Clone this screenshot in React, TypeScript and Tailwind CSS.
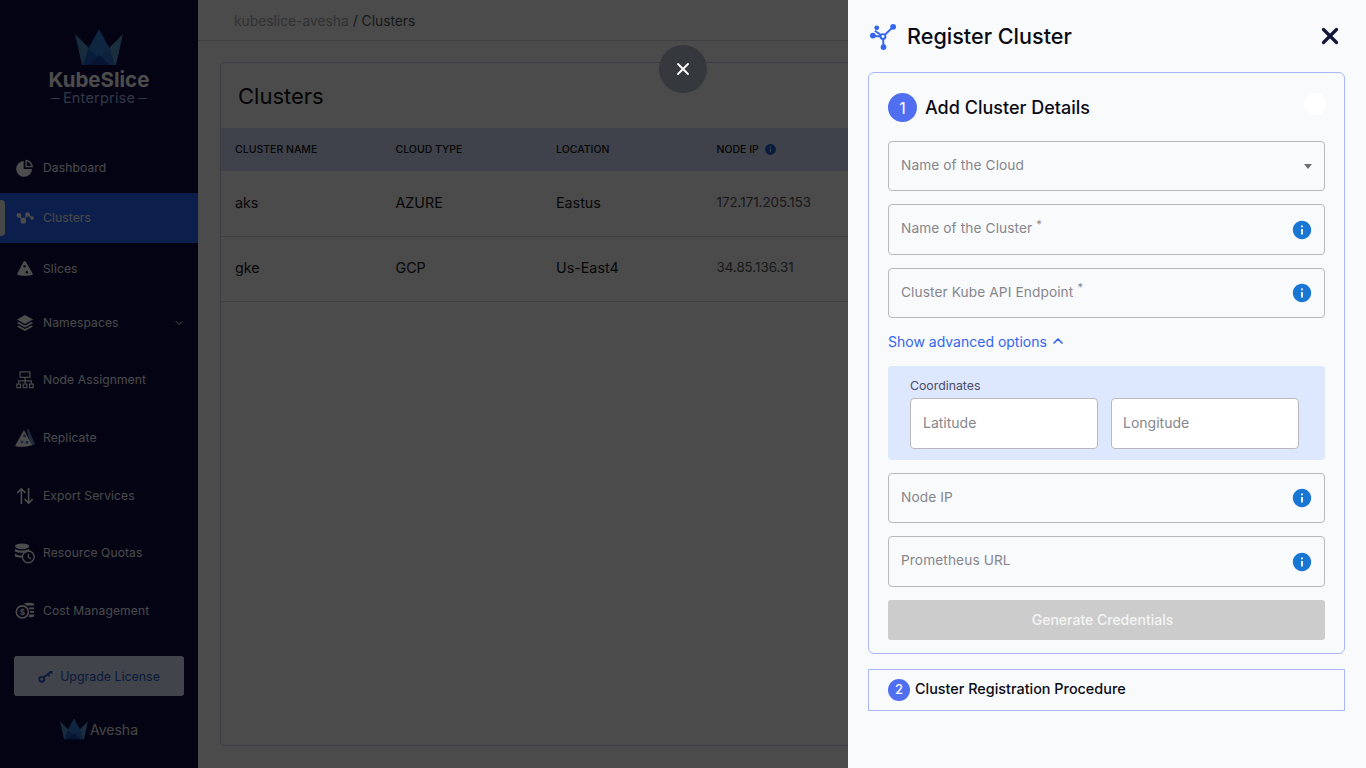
import { ChevronDown, ChevronUp, X } from "lucide-react";

const font = "font-['Inter','Liberation_Sans',sans-serif]";

const Crown = ({ className }: { className: string }) => (
  <svg viewBox="0 0 48 37" className={className}>
    <path d="M0 5 L17 22 L12 36 H7z" fill="#4f93c8" />
    <path d="M48 5 L31 22 L36 36 H41z" fill="#5a9ccc" />
    <path d="M24 0 L35 20 L24 30 L13 20z" fill="#2f7fd8" />
    <path d="M13 20 L24 29 L13 36 H8z" fill="#2460c8" />
    <path d="M35 20 L24 29 L35 36 H40z" fill="#2f70cc" />
    <path d="M24 26 L35 36 H13z" fill="#1a48a8" />
  </svg>
);

const PieIcon = () => (
  <svg viewBox="0 0 20 20" className="w-[18px] h-[18px]" fill="currentColor">
    <path d="M8.5 2.2 V11 H17.8 A8.8 8.8 0 1 1 8.5 2.2z" />
    <path d="M10.5 .8 A8.8 8.8 0 0 1 19 9.2 H10.5z M12 2.6 V7.7 H17 A7 7 0 0 0 12 2.6z" fillRule="evenodd" />
  </svg>
);
const ClusterIcon = () => (
  <svg viewBox="0 0 20 16" className="w-[18px] h-[14px]" fill="currentColor" stroke="currentColor" strokeWidth="1.3">
    <path d="M3 5 L8 11 L13 4 L18 8" fill="none" />
    <circle cx="3" cy="5" r="2" />
    <circle cx="8" cy="11" r="2.6" />
    <circle cx="13" cy="4" r="2" />
    <circle cx="18" cy="8" r="1.3" />
  </svg>
);
const SliceIcon = () => (
  <svg viewBox="0 0 20 20" className="w-[18px] h-[18px]">
    <path d="M9.5 1 C10 1 10.4 1.2 10.7 1.7 L19 15.8 C15 18 5 18.2 1 15.8 L8.5 1.6 C8.7 1.2 9 1 9.5 1z" fill="currentColor" />
    <circle cx="9.5" cy="7" r="1.3" fill="#0a0a42" />
    <circle cx="12" cy="13.5" r="1.3" fill="#0a0a42" />
  </svg>
);
const LayersIcon = () => (
  <svg viewBox="0 0 20 20" className="w-[18px] h-[18px]" fill="currentColor">
    <path d="M10 1 L19 6 L10 11 L1 6z" />
    <path d="M3 8.8 L10 12.8 L17 8.8 L19 10 L10 15 L1 10z" />
    <path d="M3 12.8 L10 16.8 L17 12.8 L19 14 L10 19 L1 14z" />
  </svg>
);
const NodeIcon = () => (
  <svg viewBox="0 0 20 20" className="w-[18px] h-[18px]" fill="none" stroke="currentColor" strokeWidth="1.3">
    <rect x="4.5" y="1" width="11" height="6" />
    <path d="M10 7 V11 M3 14 V11 H17 V14 M10 11 V14" />
    <rect x="1" y="14.5" width="4" height="4" />
    <rect x="8" y="14.5" width="4" height="4" />
    <rect x="15" y="14.5" width="4" height="4" />
  </svg>
);
const ReplicateIcon = () => (
  <svg viewBox="0 0 22 22" className="w-[22px] h-[22px]">
    <path d="M14 1 L21 17 L17 19 L13 4z" fill="#6d8fc8" />
    <path d="M10 3 L18 18 C13 20 6 20.5 1 19 z" fill="currentColor" />
    <circle cx="10.5" cy="9" r="1.4" fill="#5578c0" />
    <circle cx="8" cy="15" r="1.4" fill="#5578c0" />
    <circle cx="13" cy="15.5" r="1.4" fill="#5578c0" />
  </svg>
);
const ExportIcon = () => (
  <svg viewBox="0 0 20 20" className="w-[18px] h-[18px]" fill="none" stroke="currentColor" strokeWidth="1.8">
    <path d="M6 19 V2 M1.5 6.5 L6 2 L10.5 6.5" />
    <path d="M14 1 V18 M9.5 13.5 L14 18 L18.5 13.5" />
  </svg>
);
const QuotaIcon = () => (
  <svg viewBox="0 0 22 22" className="w-[21px] h-[21px]" fill="currentColor">
    <ellipse cx="8.5" cy="3.5" rx="7.5" ry="3" />
    <path d="M1 6 C3 8.5 14 8.5 16 6 V9 C13 10.5 4 11 1 9z" />
    <path d="M1 11 C3 13 7 13.3 9 13 L8 15.5 C5 15.5 2.5 15 1 14z" />
    <circle cx="15" cy="14.5" r="6.2" fill="none" stroke="currentColor" strokeWidth="1.5" />
    <path d="M15 11 V15 L18 16.5" fill="none" stroke="currentColor" strokeWidth="1.3" />
  </svg>
);
const CostIcon = () => (
  <svg viewBox="0 0 22 20" className="w-[20px] h-[18px]" fill="currentColor">
    <path d="M10 2 C12 .5 19 .5 21 2 V4 H13z M15 6 H21 V8 H16z M16.5 10 H21 V12 H16.5z M16 14 H21 V16 C19 17 17 17 15 17z" />
    <circle cx="8" cy="11" r="6.7" fill="none" stroke="currentColor" strokeWidth="1.7" />
    <text x="8" y="14.5" textAnchor="middle" fontSize="9.5" fontWeight="700" fontFamily="Liberation Sans">$</text>
  </svg>
);
const KeyIcon = () => (
  <svg viewBox="0 0 16 14" className="w-[15px] h-[13px]" fill="none" stroke="currentColor" strokeWidth="2">
    <circle cx="4" cy="10" r="2.6" />
    <path d="M6 8 L14 2 M10.5 4.6 L12.5 6.8" />
    <path d="M12 1 L15.5 1 L15.5 4.5z" fill="currentColor" stroke="none" />
  </svg>
);

const nav = [
  { label: "Dashboard", icon: <PieIcon />, h: "h-[50px]" },
  { label: "Clusters", icon: <ClusterIcon />, h: "h-[50px]", active: true },
  { label: "Slices", icon: <SliceIcon />, h: "h-[52px]" },
  { label: "Namespaces", icon: <LayersIcon />, h: "h-[56px]", more: true },
  { label: "Node Assignment", icon: <NodeIcon />, h: "h-[58px]" },
  { label: "Replicate", icon: <ReplicateIcon />, h: "h-[58px]" },
  { label: "Export Services", icon: <ExportIcon />, h: "h-[57px]" },
  { label: "Resource Quotas", icon: <QuotaIcon />, h: "h-[58px]" },
  { label: "Cost Management", icon: <CostIcon />, h: "h-[58px]" },
];

const rows = [
  { h: "h-[66px]", cells: ["aks", "AZURE", "Eastus", "172.171.205.153"] },
  { h: "h-[65px]", cells: ["gke", "GCP", "Us-East4", "34.85.136.31"] },
];

const InfoIcon = () => (
  <svg viewBox="0 0 24 24" className="w-[22px] h-[22px] shrink-0" fill="#1976d2">
    <path d="M12 2C6.48 2 2 6.48 2 12s4.48 10 10 10 10-4.48 10-10S17.52 2 12 2zm1 15h-2v-6h2v6zm0-8h-2V7h2v2z" />
  </svg>
);

const Field = ({ label, req, info, h = "h-[50px]", top = "pb-[2px]" }: { label: string; req?: boolean; info?: boolean; h?: string; top?: string }) => (
  <div className={`${h} border border-[#b9b9bd] rounded-[4px] flex items-center justify-between pl-[12px] pr-[11px]`}>
    <span className={`text-[13.7px] tracking-[0.1px] text-[#86868c] ${top}`}>
      {label}
      {req && <sup className="ml-[4px] text-[11px]">*</sup>}
    </span>
    {info && <InfoIcon />}
  </div>
);

export default function App() {
  return (
    <div className={`${font} relative flex h-screen w-full overflow-hidden bg-[#fafafa]`}>
      <aside className="w-[198px] shrink-0 bg-[#0a0a42] text-white flex flex-col">
        <div className="h-[143px] flex flex-col items-center pt-[29px]">
          <Crown className="w-[48px] h-[37px]" />
          <div className="text-[20.5px] leading-[22px] font-bold text-[#ffffff] mt-[3px]">KubeSlice</div>
          <div className="flex items-center gap-[3px] text-[#a8bce8] text-[14.5px] leading-[14px] tracking-[0.2px]">
            <span className="w-[9px] h-px bg-[#a8bce8]" />
            Enterprise
            <span className="w-[9px] h-px bg-[#a8bce8]" />
          </div>
        </div>
        <nav>
          {nav.map((n) => (
            <div key={n.label} className={`${n.h} relative flex items-center ${n.active ? "bg-[#2868ff]" : ""}`}>
              {n.active && <span className="absolute left-0 top-[7px] w-[5px] h-[36px] rounded-r-[4px] bg-[#f0f0f0]" />}
              <span className="w-[43px] flex justify-center pl-[7px] pr-[1px] shrink-0 text-[#ffffff]">{n.icon}</span>
              <span className="text-[12.1px] tracking-[0.1px] text-[#f4f4f4] pt-[1px]">{n.label}</span>
              {n.more && <ChevronDown className="ml-auto mr-[13px] w-[12px] h-[12px]" strokeWidth={2} />}
            </div>
          ))}
        </nav>
        <div className="mx-[14px] mt-[16px] h-[40px] rounded-[3px] bg-[#dbe4fb] flex items-center justify-center gap-[7px] text-[#2855c8] text-[12.4px]">
          <KeyIcon />
          <span className="pt-[2px]">Upgrade License</span>
        </div>
        <div className="mt-[22px] flex items-center justify-center gap-[2px]">
          <Crown className="w-[28px] h-[22px]" />
          <span className="text-[14px] text-[#e8e8e8]">Avesha</span>
        </div>
      </aside>

      <main className="flex-1 min-w-0 flex flex-col">
        <div className="h-[41px] shrink-0 border-b border-[#d8d8dc] flex items-center pl-[36px] pt-[2px] text-[13.8px]">
          <span className="text-[#a8a8ae]">kubeslice-avesha</span>
          <span className="text-[#55555c] ml-[4px]">/ Clusters</span>
        </div>
        <div className="flex-1 mt-[21px] ml-[22px] mr-[21px] mb-[22px] bg-[#fafafa] border border-[#c8cedd] rounded-[4px]">
          <div className="h-[65px] flex items-center pl-[17px] pt-[2px] text-[22px] text-[#111114]">Clusters</div>
          <div className="h-[43px] bg-[#d3ddf7] flex items-center pl-[14px] text-[10.5px] font-medium text-[#15151a]">
            <span className="w-[160.5px]">CLUSTER NAME</span>
            <span className="w-[160.5px]">CLOUD TYPE</span>
            <span className="w-[160.5px]">LOCATION</span>
            <span className="flex items-center gap-[5px]">
              NODE IP
              <svg viewBox="0 0 24 24" className="w-[13px] h-[13px]" fill="#1f5fd0">
                <path d="M12 2C6.48 2 2 6.48 2 12s4.48 10 10 10 10-4.48 10-10S17.52 2 12 2zm1 15h-2v-6h2v6zm0-8h-2V7h2v2z" />
              </svg>
            </span>
          </div>
          {rows.map((r) => (
            <div key={r.cells[0]} className={`${r.h} flex items-center pl-[14px] pb-[2px] text-[14.3px] text-[#18181c] border-b border-[#d8d8dc]`}>
              <span className="w-[160.5px]">{r.cells[0]}</span>
              <span className="w-[160.5px]">{r.cells[1]}</span>
              <span className="w-[160.5px]">{r.cells[2]}</span>
              <span className="text-[13.3px] text-[#55555c]">{r.cells[3]}</span>
            </div>
          ))}
        </div>
      </main>

      {/* backdrop */}
      <div className="absolute inset-0 bg-black/70" />

      <button className="absolute left-[659px] top-[45px] w-[48px] h-[48px] rounded-full bg-[#35383d] flex items-center justify-center text-white">
        <X className="w-[20px] h-[20px]" strokeWidth={2.2} />
      </button>

      {/* drawer */}
      <div className="absolute right-0 top-0 bottom-0 w-[518px] bg-[#f9fafc] pl-[20px] pr-[21px]">
        <div className="h-[72px] flex items-center">
          <svg viewBox="0 0 28 28" className="w-[27px] h-[27px] ml-[2px] mr-[10px]" fill="#3366ee" stroke="#3366ee">
            <path d="M13.5 14 L24 4 M13.5 14 L5 8 M13.5 14 L3 13.5 M13.5 14 L14 24" strokeWidth="2" fill="none" />
            <circle cx="24" cy="4" r="3" stroke="none" />
            <circle cx="3" cy="13" r="3" stroke="none" />
            <circle cx="14" cy="25" r="3" stroke="none" />
            <circle cx="7" cy="5" r="2.5" stroke="none" />
            <circle cx="13.5" cy="14" r="2.5" fill="#f9fafc" strokeWidth="2" />
          </svg>
          <h2 className="text-[21.6px] font-medium text-[#0b0b14] pt-[1px]">Register Cluster</h2>
          <X className="ml-auto mr-[2px] w-[26px] h-[26px] text-[#14163a]" strokeWidth={3} />
        </div>

        <section className="border border-[#aab8fb] rounded-[6px] px-[19px] pt-[20px] pb-[13px] h-[582px]">
          <div className="h-[29px] flex items-center relative">
            <span className="w-[29px] h-[29px] rounded-full bg-[#4f6ef0] text-white flex items-center justify-center text-[16px]">1</span>
            <span className="ml-[8px] text-[18px] font-medium text-[#0b0b14]">Add Cluster Details</span>
            <span className="absolute right-[-1px] top-0 w-[22px] h-[22px] rounded-full bg-white" />
          </div>
          <div className="mt-[19px] flex flex-col gap-[13px]">
            <div className="h-[50px] border border-[#b9b9bd] rounded-[4px] flex items-center justify-between pl-[12px] pr-[12px]">
              <span className="text-[13.7px] tracking-[0.1px] text-[#86868c] pb-[2px]">Name of the Cloud</span>
              <span className="w-0 h-0 border-x-[4.5px] border-x-transparent border-t-[5px] border-t-[#707074]" />
            </div>
            <Field label="Name of the Cluster" req info h="h-[51px]" />
            <Field label="Cluster Kube API Endpoint" req info />
          </div>
          <div className="h-[48px] flex items-center pb-[2px] text-[14px] text-[#3366ee]">
            Show advanced options
            <ChevronUp className="ml-[3px] w-[16px] h-[16px]" strokeWidth={2.5} />
          </div>
          <div className="h-[94px] rounded-[4px] bg-[#dde7fe] pl-[22px] pt-[13px]">
            <div className="text-[12.3px] leading-[14px] text-[#4a4a66] mb-[5px]">Coordinates</div>
            <div className="flex gap-[13px]">
              <div className="w-[188px] h-[51px] bg-white border border-[#b9b9bd] rounded-[4px] flex items-center pl-[12px] pb-[2px] text-[14px] text-[#86868c]">Latitude</div>
              <div className="w-[188px] h-[51px] bg-white border border-[#b9b9bd] rounded-[4px] flex items-center pl-[11px] pb-[2px] text-[14px] text-[#86868c]">Longitude</div>
            </div>
          </div>
          <div className="mt-[13px] flex flex-col gap-[13px]">
            <Field label="Node IP" info />
            <Field label="Prometheus URL" info h="h-[51px]" />
            <div className="h-[40px] rounded-[3px] bg-[#cccccc] flex items-center justify-center pr-[8px] pb-[2px] text-[14px] font-medium text-[#f4f4f4]">Generate Credentials</div>
          </div>
        </section>

        <div className="mt-[15px] h-[42px] border border-[#aab8fb] flex items-center pl-[19px]">
          <span className="w-[22px] h-[22px] rounded-full bg-[#4f6ef0] text-white flex items-center justify-center text-[13px] font-medium">2</span>
          <span className="ml-[5px] text-[14.4px] font-medium text-[#0b0b14] pb-[2px]">Cluster Registration Procedure</span>
        </div>
      </div>
    </div>
  );
}
